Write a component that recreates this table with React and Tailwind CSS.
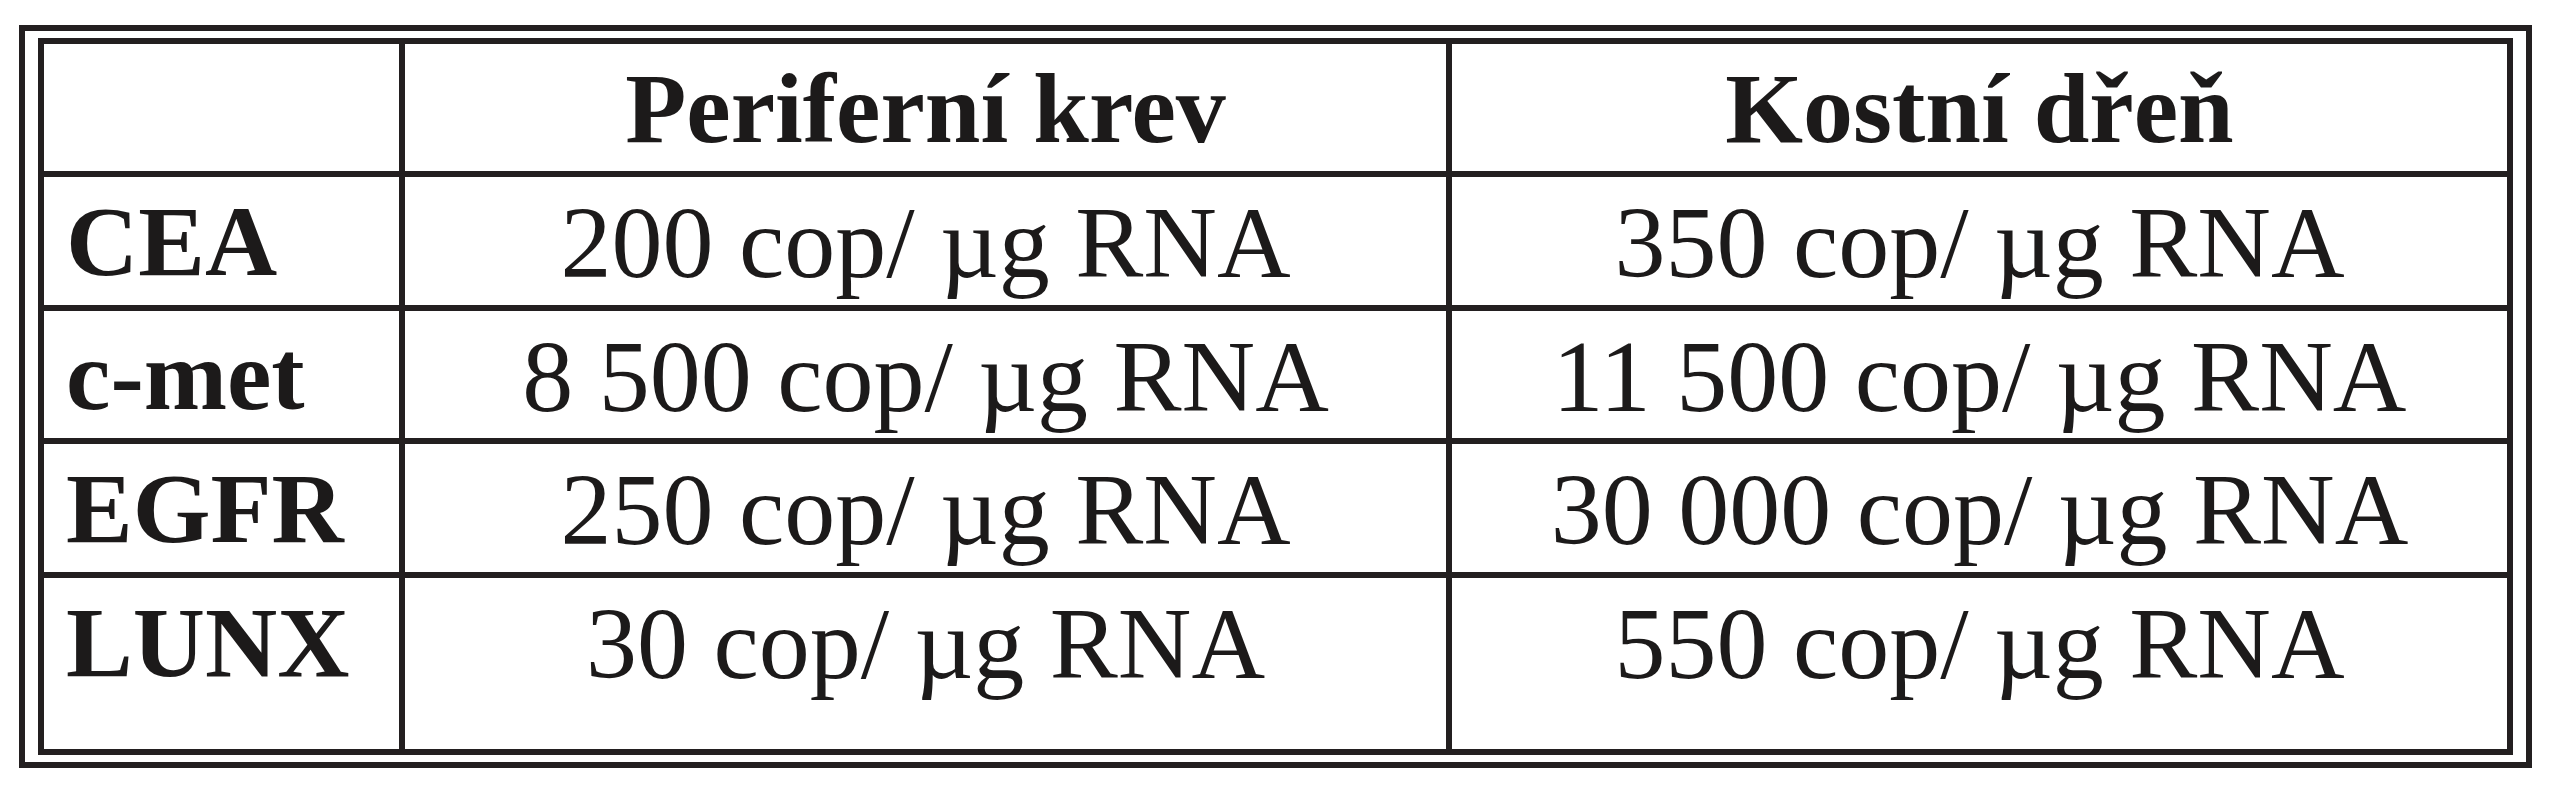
import React from 'react';

const rows = [
  { name: 'CEA', blood: '200 cop/ µg RNA', marrow: '350 cop/ µg RNA' },
  { name: 'c-met', blood: '8 500 cop/ µg RNA', marrow: '11 500 cop/ µg RNA' },
  { name: 'EGFR', blood: '250 cop/ µg RNA', marrow: '30 000 cop/ µg RNA' },
  { name: 'LUNX', blood: '30 cop/ µg RNA', marrow: '550 cop/ µg RNA' },
];

const App = () => {
  return (
    <div className="w-[2552px] h-[800px] bg-white pt-[25px] pl-[19px] font-['Liberation_Serif',serif] text-[#1c1a1a]">
      <div className="w-[2513px] border-[6px] border-[#231f20] px-[13px] py-[7px]">
        <div className="grid grid-cols-[355px_1041px_1055px] grid-rows-[127px_128px_127px_128px_171px] gap-[6px] bg-[#231f20] border-[6px] border-[#231f20]">
          <div className="bg-white" />
          <div className="bg-white flex justify-center pt-[15px] text-[100px] leading-none font-bold">
            Periferní krev
          </div>
          <div className="bg-white flex justify-center pt-[15px] text-[100px] leading-none font-bold">
            Kostní dřeň
          </div>

          {rows.map(row => (
            <React.Fragment key={row.name}>
              <div className="bg-white pl-[22px] pt-[15px] text-[100px] leading-none font-bold">
                {row.name}
              </div>
              <div className="bg-white flex justify-center pt-[15px] text-[102px] leading-none">
                {row.blood}
              </div>
              <div className="bg-white flex justify-center pt-[15px] text-[102px] leading-none">
                {row.marrow}
              </div>
            </React.Fragment>
          ))}
        </div>
      </div>
    </div>
  );
};

export default App;
